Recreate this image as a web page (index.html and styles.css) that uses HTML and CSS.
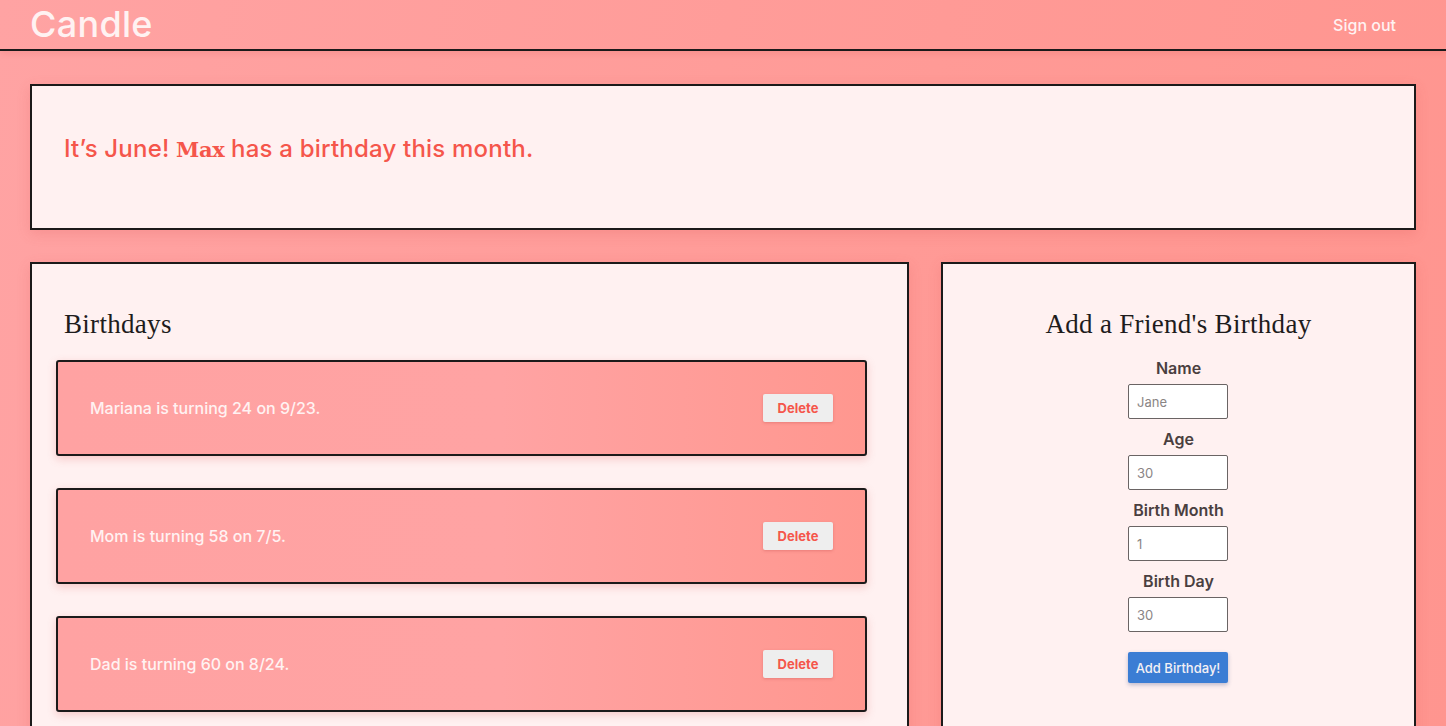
FILE: index.html
```html
<!DOCTYPE html>
<html>
<head>
<meta charset="utf-8">
<link rel="stylesheet" href="styles.css">
</head>
<body>
<header class="topbar">
  <div class="logo">Candle</div>
  <a class="signout" href="#">Sign out</a>
</header>
<main class="main">
  <section class="banner card">
    <p class="banner-text">It’s June! <span class="name">Max</span> has a birthday this month.</p>
  </section>
  <div class="columns">
    <section class="card list-card">
      <h2 class="title">Birthdays</h2>
      <ul class="list">
        <li class="row"><span>Mariana is turning 24 on 9/23.</span><button class="del">Delete</button></li>
        <li class="row"><span>Mom is turning 58 on 7/5.</span><button class="del">Delete</button></li>
        <li class="row"><span>Dad is turning 60 on 8/24.</span><button class="del">Delete</button></li>
      </ul>
    </section>
    <section class="card form-card">
      <h2 class="title center">Add a Friend's Birthday</h2>
      <form class="form">
        <label class="lbl">Name</label>
        <input class="inp" placeholder="Jane">
        <label class="lbl">Age</label>
        <input class="inp" placeholder="30">
        <label class="lbl">Birth Month</label>
        <input class="inp" placeholder="1">
        <label class="lbl">Birth Day</label>
        <input class="inp" placeholder="30">
        <button type="button" class="add">Add Birthday!</button>
      </form>
    </section>
  </div>
</main>
</body>
</html>
```
FILE: styles.css
```css
html, body { margin: 0; padding: 0; }
body {
  font-family: Inter, "Noto Sans", sans-serif;
  background: linear-gradient(100deg, #ffa3a3 0%, #ff9a96 60%, #ff958f 100%);
  min-height: 726px;
  overflow: hidden;
}
.topbar {
  height: 49px;
  border-bottom: 2px solid #1a1a1a;
  display: flex;
  align-items: center;
  justify-content: space-between;
  padding: 0 50px 0 30px;
  box-shadow: 0 2px 6px rgba(200,60,60,0.15);
}
.logo {
  color: #fff2f2;
  font-size: 36px;
  font-weight: 500;
  letter-spacing: 0.3px;
  margin-top: -2px;
}
.signout {
  color: #fff2f2;
  text-decoration: none;
  font-size: 16px;
  font-weight: 500;
}
.main {
  padding: 33px 30px 0 30px;
}
.card {
  background: #fff1f1;
  border: 2px solid #1c1a1a;
  box-shadow: 0 4px 12px rgba(210,70,70,0.18);
  box-sizing: border-box;
}
.banner {
  height: 146px;
  padding: 0 32px;
  display: flex;
  align-items: center;
}
.banner-text {
  margin: 0 0 18px 0;
  color: #f5564b;
  font-size: 24px;
  font-weight: 500;
  letter-spacing: 0.2px;
}
.name {
  font-family: "DejaVu Serif", serif;
  font-weight: 900;
  font-size: 21px;
  letter-spacing: -0.3px;
}
.columns {
  display: grid;
  grid-template-columns: 879px 1fr;
  gap: 32px;
  margin-top: 32px;
}
.list-card {
  padding: 40px 40px 0 24px;
  height: 500px;
}
.form-card {
  padding: 40px 20px 0;
  height: 500px;
}
.title {
  font-family: "Liberation Serif", serif;
  font-weight: 400;
  font-size: 27px;
  color: #1e1c1c;
  margin: 0 0 0 8px;
  line-height: 40px;
  letter-spacing: 0.3px;
}
.title.center { text-align: center; margin: 0; }
.list {
  list-style: none;
  margin: 16px 0 0 0;
  padding: 0;
  display: flex;
  flex-direction: column;
  gap: 32px;
}
.row {
  height: 96px;
  box-sizing: border-box;
  border: 2px solid #1c1a1a;
  border-radius: 3px;
  background: linear-gradient(90deg, #ffa2a2 0%, #ffa3a3 55%, #ff978f 100%);
  box-shadow: 0 3px 8px rgba(220,80,80,0.25);
  display: flex;
  align-items: center;
  justify-content: space-between;
  padding: 0 32px;
  color: #fff2f2;
  font-size: 16px;
  font-weight: 500;
}
.del {
  width: 70px;
  height: 28px;
  border: none;
  border-radius: 2px;
  background: #eeeeee;
  color: #f5564b;
  font-family: Inter, "Noto Sans", sans-serif;
  font-weight: 700;
  font-size: 13px;
  box-shadow: 0 1px 3px rgba(180,60,60,0.3);
  margin-top: 0;
}
.form {
  display: flex;
  flex-direction: column;
  align-items: center;
  margin-top: 14px;
}
.lbl {
  font-size: 16px;
  font-weight: 600;
  color: #4a3f40;
  line-height: 20px;
  margin-bottom: 6px;
}
.inp {
  width: 100px;
  height: 35px;
  box-sizing: border-box;
  border: 1px solid #6a6464;
  border-radius: 2px;
  background: #fff;
  padding: 0 8px;
  font-family: Inter, "Noto Sans", sans-serif;
  font-size: 13px;
  margin-bottom: 10px;
  margin-left: -1px;
}
.inp::placeholder { color: #8a8585; }
.add {
  margin-top: 10px;
  margin-left: -1px;
  width: 100px;
  height: 31px;
  border: none;
  border-radius: 2px;
  background: #3b7dd4;
  color: #f4f0f4;
  font-family: Inter, "Noto Sans", sans-serif;
  font-size: 13px;
  font-weight: 500;
  box-shadow: 0 2px 4px rgba(40,60,120,0.3);
}
```
